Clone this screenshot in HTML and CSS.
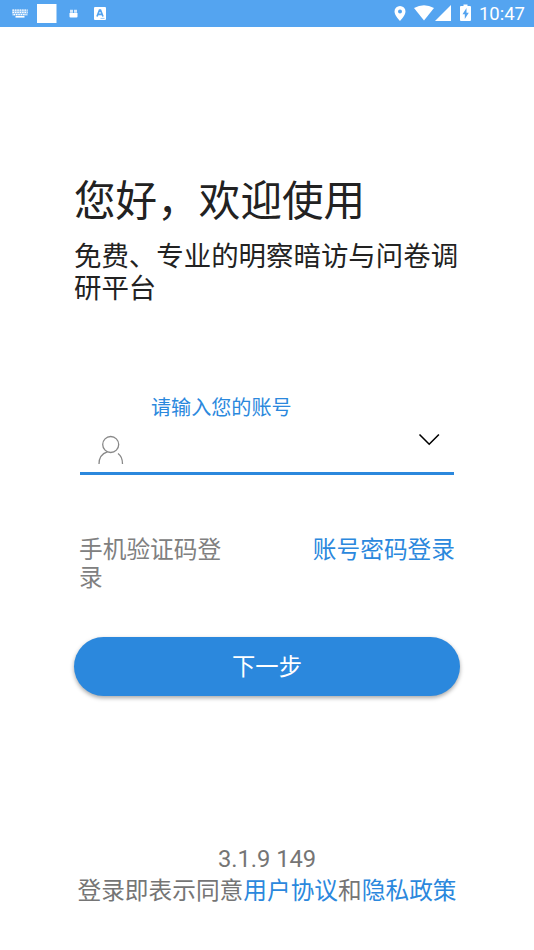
FILE: index.html
```html
<!DOCTYPE html>
<html lang="zh-CN">
<head>
<meta charset="utf-8">
<title>登录</title>
<link rel="stylesheet" href="styles.css">
</head>
<body>
<header class="status">
  <svg class="status-icons" width="120" height="27" viewBox="0 0 120 27" fill="#fff">
    <path d="M12 9.500h16v6H12z" opacity=".35"/>
    <path d="M12.500 10.200h15M12.500 12.400h15M13.500 14.600h13" stroke="#fff" stroke-width="1.300" stroke-dasharray="1.500 .9"/>
    <path d="M15.500 16h9v1.600h-9z"/>
    <path d="M37 4h19.500v19H37z"/>
    <path d="M69.500 13h8v3.500q0 1-1 1h-6q-1 0-1-1z"/>
    <path d="M70 9.700h3v3h-3zM74 9.700h3v3h-3z" opacity=".75"/>
    <rect x="94" y="7" width="12" height="13" rx="1"/>
    <path d="M97 16.500l2.500-6.500h1l2.500 6.500M98 14.300h4" fill="none" stroke="#54a4f0" stroke-width="1.700"/>
    <path d="M100.500 18.400h4" stroke="#54a4f0" stroke-width=".6"/>
  </svg>
  <div class="status-right">
    <svg width="80" height="27" viewBox="0 0 80 27" fill="#fff">
      <path fill-rule="evenodd" d="M8 6a5.500 5.500 0 0 0-5.500 5.500C2.500 15.500 8 21 8 21s5.500-5.500 5.500-9.500A5.500 5.500 0 0 0 8 6zm0 3.500a2 2 0 1 1 0 4 2 2 0 0 1 0-4z"/>
      <path d="M22 8q10-5.500 20 0L32 20.500z"/>
      <path d="M59 5v16H43z"/>
      <path fill-rule="evenodd" d="M71.500 4.500h4V6H78q1 0 1 1v13q0 1-1 1h-9q-1 0-1-1V7q0-1 1-1h2.500zM74.500 8l-4 6.300h2.300V19l4-6.300h-2.300z"/>
    </svg>
    <span class="time">10:47</span>
  </div>
</header>
<main class="login">
  <h1 class="title">您好，欢迎使用</h1>
  <p class="subtitle">免费、专业的明察暗访与问卷调研平台</p>
  <section class="field">
    <div class="field-label">请输入您的账号</div>
    <div class="field-row">
      <svg class="user" width="28" height="32" viewBox="0 0 28 32" fill="none" stroke="#888" stroke-width="1.300">
        <circle cx="13.700" cy="11.500" r="8"/>
        <path d="M10.300 18.800C5 20.500 2 25 2 31M21 20.500C24 22.500 25.500 26.500 25.500 31"/>
      </svg>
      <svg class="chevron" width="22" height="14" viewBox="0 0 22 14" fill="none" stroke="#000" stroke-width="1.600"><path d="M1.500 1.500l9.700 9.700 9.700-9.700"/></svg>
    </div>
  </section>
  <nav class="modes">
    <a class="mode">手机验证码登录</a>
    <a class="mode active">账号密码登录</a>
  </nav>
  <button class="next">下一步</button>
</main>
<footer class="footer">
  <div>3.1.9 149</div>
  <div>登录即表示同意<a class="link">用户协议</a>和<a class="link">隐私政策</a></div>
</footer>
</body>
</html>
```
FILE: styles.css
```css
* { box-sizing: border-box; }
body {
  margin: 0;
  height: 950px;
  display: flex;
  flex-direction: column;
  overflow: hidden;
  background: #fff;
  color: #222;
  font-family: Roboto, "Noto Sans CJK SC", sans-serif;
}
svg { display: block; flex: none; }
.status {
  height: 27px;
  flex: none;
  display: flex;
  justify-content: space-between;
  background: #54a4f0;
  color: #fff;
}
.status-right { display: flex; padding-right: 9px; }
.status-right svg { margin-right: 7px; }
.time { font-size: 18.500px; line-height: 28px; }
.login { padding: 0 74px; }
.title {
  margin: 149px 0 0;
  font-size: 41.600px;
  font-weight: 400;
  line-height: 52px;
  white-space: nowrap;
}
.subtitle {
  margin: 13px 0 0;
  width: 390px;
  font-size: 27.450px;
  line-height: 32px;
}
.field {
  margin: 89px 6px 0;
  height: 81px;
  border-bottom: 3px solid #2b88dd;
}
.field-label {
  padding-left: 71px;
  font-size: 20.100px;
  line-height: 28px;
  color: #2b88dd;
}
.field-row {
  display: flex;
  justify-content: space-between;
  padding: 10px 14px 0 17px;
}
.user { margin-top: 1px; }
.chevron { margin-top: 1px; }
.modes {
  display: flex;
  justify-content: space-between;
  margin: 61px 5px 0;
  font-size: 23.700px;
  line-height: 28px;
}
.mode { width: 150px; color: #808080; }
.mode.active { width: auto; color: #2b88dd; }
.next {
  display: block;
  width: 386px;
  height: 59px;
  margin: 45px 0 0;
  padding: 2px 0 0;
  border: 0;
  border-radius: 30px;
  background: #2b88dd;
  box-shadow: 0 2px 4px rgba(0, 0, 0, .35);
  color: #fff;
  font: inherit;
  font-size: 23.300px;
  line-height: 57px;
}
.footer {
  margin-top: 148px;
  text-align: center;
  font-size: 23.700px;
  line-height: 31.500px;
  color: #757575;
  white-space: nowrap;
}
.link { color: #2b88dd; }
```
